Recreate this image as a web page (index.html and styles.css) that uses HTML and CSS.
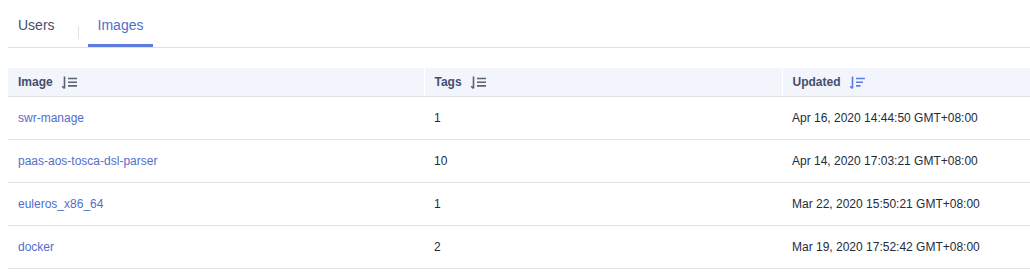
FILE: index.html
```html
<!DOCTYPE html>
<html>
<head>
<meta charset="utf-8">
<link rel="stylesheet" href="styles.css">
</head>
<body>
<div class="page">
  <div class="tabs">
    <div class="tab">Users</div>
    <div class="tab-sep"></div>
    <div class="tab active">Images</div>
  </div>
  <table class="grid">
    <colgroup>
      <col class="c1"><col class="c2"><col class="c3">
    </colgroup>
    <thead>
      <tr>
        <th>Image <svg class="sort" viewBox="0 0 16 16"><path d="M3.5 1.5v12M3.5 13.5L1.2 11.2" /><path d="M7 3.5h9M7 7.2h9M7 10.9h9" /></svg></th>
        <th class="sep">Tags <svg class="sort" viewBox="0 0 16 16"><path d="M3.5 1.5v12M3.5 13.5L1.2 11.2" /><path d="M7 3.5h9M7 7.2h9M7 10.9h9" /></svg></th>
        <th class="sep">Updated <svg class="sort active" viewBox="0 0 16 16"><path d="M3.5 1.5v12M3.5 13.5L1.2 11.2" /><path d="M7 3.5h9M7 7.2h7M7 10.9h4.5" /></svg></th>
      </tr>
    </thead>
    <tbody>
      <tr><td><a class="link">swr-manage</a></td><td>1</td><td>Apr 16, 2020 14:44:50 GMT+08:00</td></tr>
      <tr><td><a class="link">paas-aos-tosca-dsl-parser</a></td><td>10</td><td>Apr 14, 2020 17:03:21 GMT+08:00</td></tr>
      <tr><td><a class="link">euleros_x86_64</a></td><td>1</td><td>Mar 22, 2020 15:50:21 GMT+08:00</td></tr>
      <tr><td><a class="link">docker</a></td><td>2</td><td>Mar 19, 2020 17:52:42 GMT+08:00</td></tr>
    </tbody>
  </table>
</div>
</body>
</html>
```
FILE: styles.css
```css
html, body {
  margin: 0;
  padding: 0;
  background: #fff;
  overflow: hidden;
}
body {
  font-family: "Liberation Sans", Arial, sans-serif;
  color: #252b3a;
}
.page {
  padding-left: 8px;
}
.tabs {
  display: flex;
  align-items: center;
  padding-top: 15px;
  border-bottom: 1px solid #dfe1e6;
}
.tab {
  font-size: 14px;
  line-height: 20px;
  padding: 0 10px 9px;
  border-bottom: 3px solid transparent;
  color: #464d6e;
}
.tab.active {
  color: #526ecc;
  border-bottom-color: #5e7ce0;
}
.tab-sep {
  width: 1px;
  height: 13px;
  background: #dfe1e6;
  margin: 2px 9px 0 13px;
}
.grid {
  margin-top: 20px;
  width: 1022px;
  table-layout: fixed;
  border-collapse: collapse;
  font-size: 12px;
}
.c1 { width: 416px; }
.c2 { width: 358px; }
.grid th {
  background: #f2f5fc;
  height: 28px;
  padding: 0 10px;
  text-align: left;
  font-weight: bold;
  color: #464d6e;
  line-height: 28px;
  border-bottom: 1px solid #dfe1e6;
  white-space: nowrap;
}
.grid th.sep {
  border-left: 1px solid #fff;
}
.sort {
  width: 16px;
  height: 16px;
  vertical-align: middle;
  margin-left: 5px;
  fill: none;
  stroke: #5c6173;
  stroke-width: 1.6;
}
.sort.active {
  stroke: #5e7ce0;
}
.grid td {
  height: 41px;
  padding: 0 10px 1px;
  border-bottom: 1px solid #dfe1e6;
  vertical-align: middle;
  color: #252b3a;
  white-space: nowrap;
}
.link {
  color: #526ecc;
  text-decoration: none;
}
```
